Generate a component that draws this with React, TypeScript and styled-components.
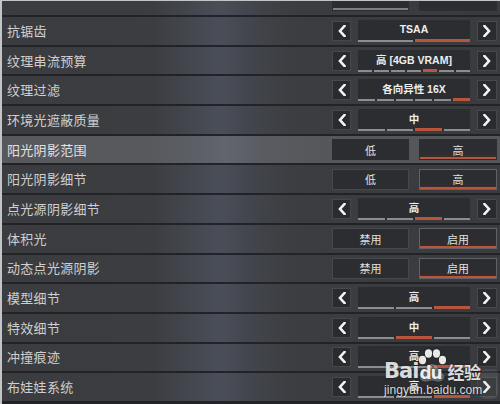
import React from 'react';
import styled, { createGlobalStyle } from 'styled-components';

const Global = createGlobalStyle`
  html, body { margin: 0; padding: 0; background: #222326; }
  body {
    width: 500px; height: 404px; overflow: hidden;
    font-family: "Noto Sans CJK SC", "Noto Sans", sans-serif;
  }
`;

const RED = '#b9553c';

const Frame = styled.div`
  position: relative;
  width: 500px;
  height: 404px;
  box-sizing: border-box;
  border-top: 1px solid #c3c4c6;
  border-left: 2px solid #c3c4c6;
  background: #222326;
  overflow: hidden;
  display: flex;
  flex-direction: column;
`;

const normalBg = `linear-gradient(90deg, #3b3c40 0%, #3c3d41 30%, #44474f 38%, #4a4e58 44%, #42454d 50%, #3c3d41 58%, #3a3b3f 100%)`;
const hlBg = `linear-gradient(90deg, #57585c 0%, #58595d 30%, #5d6068 40%, #62656e 45%, #5a5c62 52%, #56575b 62%, #55565a 100%)`;

const Row = styled.div<{ $hl?: boolean; $partial?: boolean }>`
  flex: none;
  height: ${p => (p.$partial ? '14px' : '29.7px')};
  box-sizing: border-box;
  border-top: ${p => (p.$partial ? 'none' : '2px solid #222326')};
  display: flex;
  align-items: ${p => (p.$partial ? 'flex-end' : 'center')};
  padding: ${p => (p.$partial ? '0 3px 4px 5px' : '0 3px 0 5px')};
  background: ${p => (p.$hl ? hlBg : normalBg)};
  overflow: hidden;
`;

const Label = styled.div<{ $hl?: boolean }>`
  flex: 1;
  font-size: 13px;
  line-height: 16px;
  color: ${p => (p.$hl ? '#e2e2e2' : '#cfcfcf')};
  letter-spacing: 0.3px;
  white-space: nowrap;
`;

const ArrowGroup = styled.div`
  flex: none;
  width: 165px;
  display: grid;
  grid-template-columns: 19px 1fr 20px;
  column-gap: 7px;
  align-items: center;
`;

const ArrowBox = styled.div`
  height: 20px;
  box-sizing: border-box;
  background: #2a2b2e;
  border: 1px solid #47484c;
  display: flex;
  align-items: center;
  justify-content: center;
`;

const ValueBox = styled.div`
  height: 22px;
  background: #2c2d30;
  display: flex;
  flex-direction: column;
`;

const ValueText = styled.div`
  flex: 1;
  display: flex;
  align-items: center;
  justify-content: center;
  font-family: "Liberation Sans", "Noto Sans CJK SC", sans-serif;
  font-weight: bold;
  font-size: 10.5px;
  color: #eeeeee;
  white-space: nowrap;
`;

const SegBar = styled.div`
  height: 3px;
  display: flex;
  align-items: flex-end;
  gap: 2px;
`;

const Seg = styled.div<{ $on?: boolean }>`
  flex: 1;
  height: ${p => (p.$on ? '3px' : '2px')};
  background: ${p => (p.$on ? RED : '#8c8d90')};
`;

const ToggleGroup = styled.div`
  flex: none;
  width: 165px;
  display: grid;
  grid-template-columns: 77px 78px;
  column-gap: 10px;
  align-items: center;
`;

const ToggleBtn = styled.div<{ $sel?: boolean; $flat?: boolean }>`
  height: 21px;
  box-sizing: border-box;
  display: flex;
  align-items: center;
  justify-content: center;
  font-size: 11px;
  color: #e0e0e0;
  background: ${p =>
    p.$sel
      ? 'linear-gradient(180deg, #2c2d30 0%, #2c2d30 60%, #3a2c29 100%)'
      : '#2c2d30'};
  border: 1px solid ${p => (p.$flat ? '#2c2d30' : p.$sel ? '#616266' : '#47484c')};
  box-shadow: ${p => (p.$sel ? `inset 0 -2px 0 ${RED}` : 'none')};
`;

const PartialBtn = styled(ToggleBtn)<{ $under?: boolean }>`
  height: 20px;
  color: #8a8a8a;
  align-items: flex-start;
  font-size: 10px;
  line-height: 6px;
  box-shadow: ${p => (p.$under ? 'inset 0 -2px 0 #7d7e81' : 'none')};
`;

const Watermark = styled.div`
  position: absolute;
  left: 382px;
  top: 348px;
  width: 110px;
  color: rgba(255, 255, 255, 0.85);
  text-shadow: 0 0 2px rgba(0, 0, 0, 0.55);
  pointer-events: none;
`;

const WmTop = styled.div`
  display: flex;
  align-items: flex-end;
  height: 33px;
`;

const WmBai = styled.span`
  font-family: "DejaVu Sans", "Liberation Sans", sans-serif;
  font-weight: bold;
  font-size: 21px;
  line-height: 21px;
  letter-spacing: -1px;
`;

const Paw = styled.div`
  position: relative;
  width: 28px;
  height: 33px;
  flex: none;
  display: flex;
  align-items: flex-end;
`;

const PawIcon = styled.svg`
  position: absolute;
  left: 0;
  top: 0;
  filter: drop-shadow(0 0 1px rgba(0, 0, 0, 0.5));
`;

const PawDu = styled.span`
  position: relative;
  margin-left: 1px;
  font-family: "DejaVu Sans", "Liberation Sans", sans-serif;
  font-weight: bold;
  font-size: 17px;
  line-height: 17px;
  letter-spacing: -1px;
  color: rgba(255, 255, 255, 0.92);
`;

const WmJy = styled.span`
  font-size: 17px;
  line-height: 20px;
  font-weight: bold;
  margin-left: 1px;
  letter-spacing: -0.5px;
`;

const WmUrl = styled.div`
  font-family: "Liberation Sans", sans-serif;
  font-size: 12px;
  line-height: 14px;
  margin-top: 1px;
  letter-spacing: 0.1px;
`;

const Blob = styled.div`
  position: absolute;
  left: 476px;
  top: 368px;
  width: 20px;
  height: 30px;
  border-radius: 8px 4px 6px 8px;
  background: rgba(200, 200, 205, 0.12);
  pointer-events: none;
`;

const Chevron = ({ dir }: { dir: 'l' | 'r' }) => (
  <svg width="8" height="12" viewBox="0 0 8 12">
    <polyline
      points={dir === 'l' ? '6.5,1 2,6 6.5,11' : '1.5,1 6,6 1.5,11'}
      fill="none"
      stroke="#f4f4f4"
      strokeWidth="2.6"
      strokeLinecap="square"
      strokeLinejoin="miter"
    />
  </svg>
);

type ArrowRow = { kind: 'arrow'; label: string; value: string; segs: number; active: number };
type ToggleRow = {
  kind: 'toggle';
  label: string;
  options: [string, string];
  sel: number;
  hl?: boolean;
};
type RowData = ArrowRow | ToggleRow;

const rows: RowData[] = [
  { kind: 'arrow', label: '抗锯齿', value: 'TSAA', segs: 2, active: 1 },
  { kind: 'arrow', label: '纹理串流预算', value: '高 [4GB VRAM]', segs: 7, active: 4 },
  { kind: 'arrow', label: '纹理过滤', value: '各向异性 16X', segs: 6, active: 5 },
  { kind: 'arrow', label: '环境光遮蔽质量', value: '中', segs: 4, active: 2 },
  { kind: 'toggle', label: '阳光阴影范围', options: ['低', '高'], sel: 1, hl: true },
  { kind: 'toggle', label: '阳光阴影细节', options: ['低', '高'], sel: 1 },
  { kind: 'arrow', label: '点光源阴影细节', value: '高', segs: 4, active: 2 },
  { kind: 'toggle', label: '体积光', options: ['禁用', '启用'], sel: 1 },
  { kind: 'toggle', label: '动态点光源阴影', options: ['禁用', '启用'], sel: 1 },
  { kind: 'arrow', label: '模型细节', value: '高', segs: 3, active: 2 },
  { kind: 'arrow', label: '特效细节', value: '中', segs: 3, active: 1 },
  { kind: 'arrow', label: '冲撞痕迹', value: '高', segs: 3, active: 2 },
  { kind: 'arrow', label: '布娃娃系统', value: '高', segs: 3, active: 2 },
];

const PawSvg = () => (
  <PawIcon width="28" height="33" viewBox="0 0 28 33">
    <g fill="#ffffff" fillOpacity="0.9">
      <ellipse cx="4.5" cy="11" rx="3.6" ry="4.2" />
      <ellipse cx="10.5" cy="4.5" rx="3.6" ry="4.2" />
      <ellipse cx="18.5" cy="4.5" rx="3.6" ry="4.2" />
      <ellipse cx="24.5" cy="11" rx="3.6" ry="4.2" />
    </g>
    <path
      fill="#ffffff"
      fillOpacity="0.3"
      d="M14 15 C9 15 8 21 4 24 C0 27 2 33 8 32.5 C11 32 13 31.5 14 31.5 C15 31.5 17 32 20 32.5 C26 33 28 27 24 24 C20 21 19 15 14 15 Z"
    />
  </PawIcon>
);

export default function App() {
  return (
    <>
      <Global />
      <Frame>
        <Row $partial>
          <Label />
          <ToggleGroup>
            <PartialBtn $flat $under>禁用</PartialBtn>
            <PartialBtn $flat>启用</PartialBtn>
          </ToggleGroup>
        </Row>
        {rows.map((r, i) => (
          <Row key={i} $hl={r.kind === 'toggle' && r.hl}>
            <Label $hl={r.kind === 'toggle' && r.hl}>{r.label}</Label>
            {r.kind === 'arrow' ? (
              <ArrowGroup>
                <ArrowBox>
                  <Chevron dir="l" />
                </ArrowBox>
                <ValueBox>
                  <ValueText>{r.value}</ValueText>
                  <SegBar>
                    {Array.from({ length: r.segs }).map((_, k) => (
                      <Seg key={k} $on={k === r.active} />
                    ))}
                  </SegBar>
                </ValueBox>
                <ArrowBox>
                  <Chevron dir="r" />
                </ArrowBox>
              </ArrowGroup>
            ) : (
              <ToggleGroup>
                {r.options.map((o, k) => (
                  <ToggleBtn key={k} $sel={k === r.sel} $flat={r.hl}>
                    {o}
                  </ToggleBtn>
                ))}
              </ToggleGroup>
            )}
          </Row>
        ))}
        <Blob />
        <Watermark>
          <WmTop>
            <WmBai>Bai</WmBai>
            <Paw>
              <PawSvg />
              <PawDu>du</PawDu>
            </Paw>
            <WmJy>经验</WmJy>
          </WmTop>
          <WmUrl>jingyan.baidu.com</WmUrl>
        </Watermark>
      </Frame>
    </>
  );
}
